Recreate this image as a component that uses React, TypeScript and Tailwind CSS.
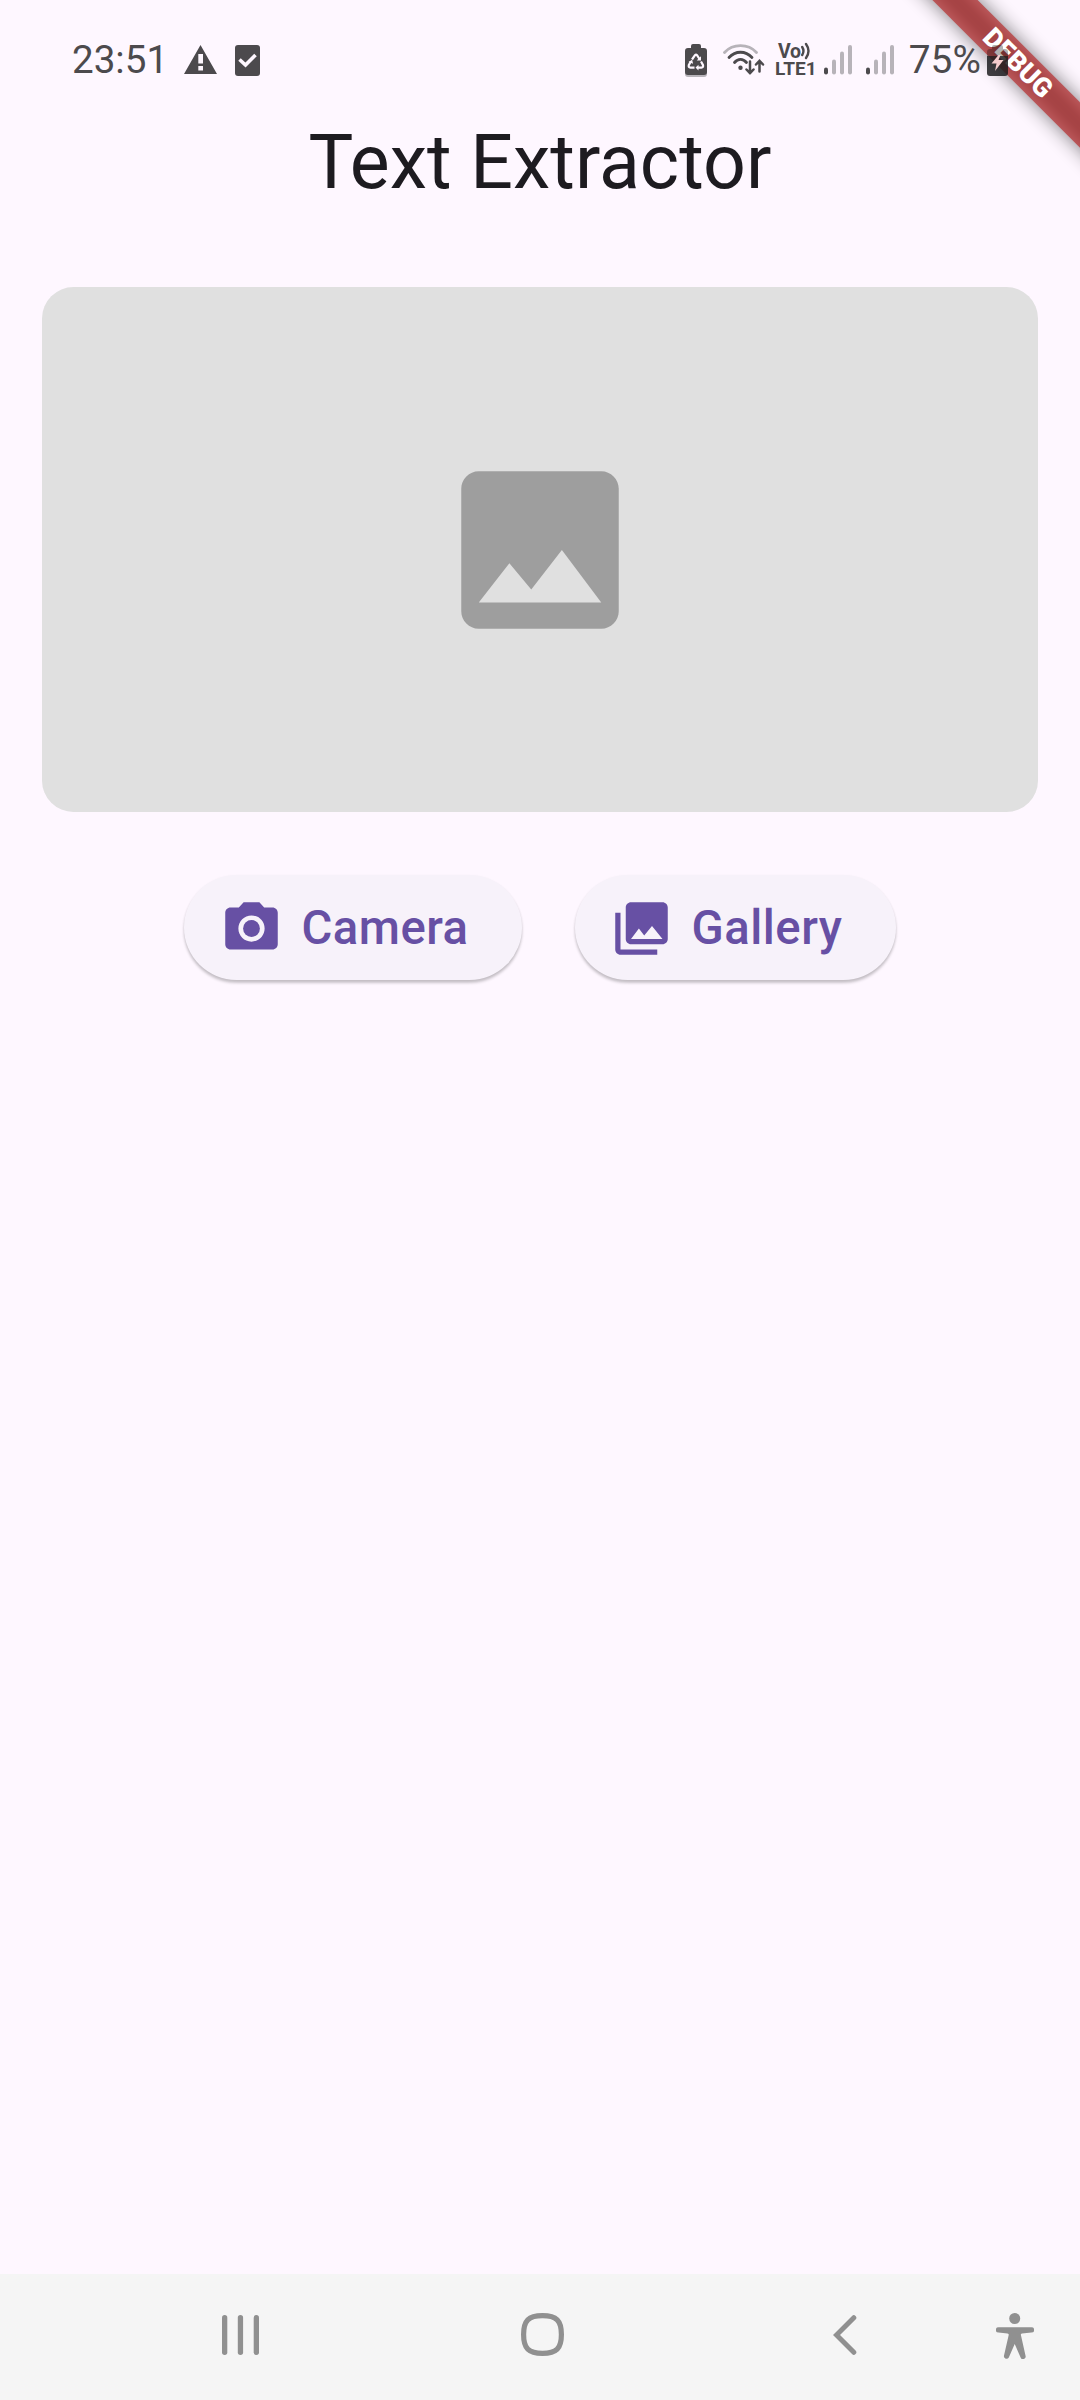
import React from 'react';

function Signal() {
  return (
    <svg width="28" height="30" viewBox="0 0 28 30" className="mt-px shrink-0">
      <rect x="0" y="22.5" width="4" height="7" rx="2" fill="#4c4a4d" />
      <rect x="8" y="14.5" width="4" height="15" rx="2" fill="#b7b3b9" />
      <rect x="16" y="6.5" width="4" height="23" rx="2" fill="#b7b3b9" />
      <rect x="24" y="0" width="4" height="29.5" rx="2" fill="#b7b3b9" />
    </svg>
  );
}

function RecycleBattery() {
  return (
    <svg width="22" height="34" viewBox="0 0 22 34" className="mt-[2px] shrink-0">
      <path d="M0 28h22v2a3 3 0 0 1-3 3H3a3 3 0 0 1-3-3z" fill="#b7b3b9" />
      <path d="M6 2a2 2 0 0 1 2-2h6a2 2 0 0 1 2 2v2h3a3 3 0 0 1 3 3v21a3 3 0 0 1-3 3H3a3 3 0 0 1-3-3V7a3 3 0 0 1 3-3h3z" fill="#4c4a4d" />
      <g fill="none" stroke="#fef7ff" strokeWidth="2.2" strokeLinejoin="round">
        <path d="M7 15.500 10 11.200q1-1.200 2 0l2.500 3.800" />
        <path d="M16 17.500l2 3.600q.6 2.400-1.600 2.500H13" />
        <path d="M5.800 17.500l-2 3.600q-.6 2.400 1.600 2.500H9.500" />
      </g>
      <path d="M16 12.200v4.300h-4.300zM13.500 20.800v5.600l-3-2.800zM3.500 18l3.600-2.200 1 4z" fill="#fef7ff" />
    </svg>
  );
}

function Wifi() {
  return (
    <svg width="42" height="34" viewBox="0 0 42 34" className="mt-[3px] shrink-0" fill="none" strokeLinecap="round">
      <path d="M1.500 8.500C10-.6 25-.6 33.500 8.500" stroke="#b7b3b9" strokeWidth="2.8" />
      <path d="M6 13.500c6.500-7 16.500-7 23 0" stroke="#4c4a4d" strokeWidth="2.8" />
      <path d="M11.500 18.500c3.500-4.300 8.500-4.300 12 0" stroke="#4c4a4d" strokeWidth="2.8" />
      <circle cx="17.500" cy="23.800" r="2.200" fill="#4c4a4d" />
      <path d="M27 17.500v11.500m-3.500-3.500 3.500 3.700 3.500-3.700M36.500 27.500V17m-3.500 3.500 3.500-3.700 3.500 3.700" stroke="#4c4a4d" strokeWidth="2.5" />
    </svg>
  );
}

function VoLte() {
  return (
    <div className="flex w-10 flex-col items-start text-[19px] leading-[17px] font-bold text-[#4c4a4d]">
      <div className="flex h-[17px] items-center pl-[3px]">
        <span className="h-[17px] text-[19.5px] leading-[18px] tracking-[-0.4px]">Vo</span>
        <svg width="10" height="18" viewBox="0 0 10 18" fill="none" stroke="#4c4a4d" strokeWidth="2.4" strokeLinecap="round">
          <path d="M1.200 5q2.500 4 0 8M5 2q5 7 0 14" />
        </svg>
      </div>
      <span>LTE1</span>
    </div>
  );
}

function ChargingBattery() {
  return (
    <svg width="21" height="32" viewBox="0 0 21 32" className="mt-[2px] shrink-0">
      <path d="M5 2a2 2 0 0 1 2-2h7a2 2 0 0 1 2 2v2h2a3 3 0 0 1 3 3v4H0V7a3 3 0 0 1 3-3h2z" fill="#000" fillOpacity="0.3" />
      <path d="M0 11h21v17a3 3 0 0 1-3 3H3a3 3 0 0 1-3-3z" fill="#1c1c1e" fillOpacity="0.84" />
      <path d="M11.500 10 4.500 18.500h5L8 26l8.500-11h-5l2-5z" fill="#f5cccd" />
    </svg>
  );
}

function StatusBar() {
  return (
    <header className="relative z-10 flex h-[120px] shrink-0 items-center pl-[72px] text-[#4c4a4d]">
      <span className="w-[111.500px] text-[38.6px] leading-none">23:51</span>
      <svg width="33" height="29" viewBox="0 0 33 29" className="-mt-px shrink-0">
        <path fillRule="evenodd" fill="#4c4a4d" d="M16.500 0 33 29H0zM14.300 9v9.500h4.700V9zM14.300 21v4.500h4.700v-4.500z" />
      </svg>
      <svg width="25" height="31" viewBox="0 0 25 31" className="mt-px ml-[18.5px] shrink-0">
        <rect width="25" height="31" rx="3" fill="#4c4a4d" />
        <path d="m4.500 14.500 6 5.500L20.500 10" fill="none" stroke="#fef7ff" strokeWidth="3.6" />
      </svg>
      <div className="ml-[425px] flex items-center">
        <RecycleBattery />
        <div className="ml-[15.5px]"><Wifi /></div>
        <div className="ml-[10.5px]"><VoLte /></div>
        <div className="ml-[9.3px]"><Signal /></div>
        <div className="ml-[14px]"><Signal /></div>
        <span className="ml-[14.5px] w-[78px] text-[38.8px] leading-none">75%</span>
        <ChargingBattery />
      </div>
    </header>
  );
}

function DebugBanner() {
  return (
    <div className="pointer-events-none absolute top-0 right-0 h-[240px] w-[240px] overflow-hidden">
      <div className="absolute top-[46.5px] left-[28px] h-[32px] w-[300px] rotate-45 bg-black/50 blur-[9.6px]" />
      <div className="absolute top-[46.5px] left-[28px] flex h-[32px] w-[300px] rotate-45 items-center justify-center bg-[#b71c1c]/63 text-[26.8px] leading-none font-black text-white">
        DEBUG
      </div>
    </div>
  );
}

type PillProps = { label: string; children: React.ReactNode; width: string };

function PillButton({ label, children, width }: PillProps) {
  return (
    <button
      className={`flex h-[105px] items-center rounded-full bg-[#f7f2fa] pt-[1.5px] pl-[35.5px] text-[47.25px] font-medium tracking-[0.5px] text-[#6750a4] shadow-[0_3px_3px_rgba(0,0,0,0.2),0_1px_3px_rgba(0,0,0,0.06)] ${width}`}
    >
      <svg viewBox="0 0 24 24" className="size-[63px] shrink-0" fill="currentColor">
        {children}
      </svg>
      <span className="ml-[18.5px]">{label}</span>
    </button>
  );
}

function NavigationBar() {
  return (
    <nav className="flex h-[126px] shrink-0 items-center bg-[#f5f5f5] pb-[5px] pl-[222px]">
      <svg width="37" height="40" viewBox="0 0 37 40" fill="#909090">
        <rect width="5.3" height="40" rx="2.65" />
        <rect x="15.8" width="5.3" height="40" rx="2.65" />
        <rect x="31.7" width="5.3" height="40" rx="2.65" />
      </svg>
      <svg width="43" height="43" viewBox="0 0 43 43" className="ml-[262px]" fill="none" stroke="#909090" strokeWidth="5.2">
        <path d="M21.500 2.600C35.500 2.600 40.400 7.500 40.400 21.500S35.500 40.400 21.500 40.400 2.600 35.500 2.600 21.500 7.500 2.600 21.500 2.600z" />
      </svg>
      <svg width="24" height="40" viewBox="0 0 24 40" className="ml-[269px]" fill="none" stroke="#909090" strokeWidth="5" strokeLinecap="round">
        <path d="M20.800 2.700 3.500 20l17.300 17.300" />
      </svg>
      <svg width="38" height="46" viewBox="0 0 38 46" className="mt-[3px] ml-[139px]" fill="#909090">
        <circle cx="18.700" cy="5.500" r="5.500" />
        <path d="M2.500 14.200h33a2.600 2.600 0 0 1 0 5.400l-9.500.8c-1 .1-1.200.8-1.100 1.600L29.600 43a2.600 2.600 0 0 1-5 1.400L18.700 31l-5.900 13.400A2.600 2.600 0 0 1 7.900 43L12.700 22c.1-.8-.2-1.500-1.200-1.600l-9-.8a2.700 2.700 0 0 1 0-5.400z" />
      </svg>
    </nav>
  );
}

export default function App() {
  return (
    <div className="relative flex h-[2400px] w-[1080px] flex-col overflow-hidden bg-[#fef7ff] font-['Roboto',sans-serif]">
      <DebugBanner />
      <StatusBar />
      <h1 className="flex h-[84px] shrink-0 items-center justify-center pt-[2px] text-[75.2px] leading-none text-[#1d1b20]">
        Text Extractor
      </h1>
      <main className="flex flex-1 flex-col items-center px-[42px] pt-[83px]">
        <section className="flex h-[525px] w-full items-center justify-center rounded-[31.5px] bg-[#e0e0e0]">
          <svg viewBox="0 0 24 24" className="size-[210px]" fill="#9e9e9e">
            <path d="M21 19V5c0-1.100-.9-2-2-2H5c-1.100 0-2 .9-2 2v14c0 1.100.9 2 2 2h14c1.100 0 2-.9 2-2zM8.500 13.500l2.500 3.010L14.500 12l4.500 6H5l3.500-4.500z" />
          </svg>
        </section>
        <div className="mt-[63px] flex gap-[52.2px]">
          <PillButton label="Camera" width="w-[338px]">
            <circle cx="12" cy="12" r="3.2" />
            <path d="M9 2L7.170 4H4c-1.100 0-2 .9-2 2v12c0 1.100.9 2 2 2h16c1.100 0 2-.9 2-2V6c0-1.100-.9-2-2-2h-3.170L15 2H9zm3 15c-2.760 0-5-2.240-5-5s2.240-5 5-5 5 2.240 5 5-2.240 5-5 5z" />
          </PillButton>
          <PillButton label="Gallery" width="w-[321px]">
            <path d="M22 16V4c0-1.100-.9-2-2-2H8c-1.100 0-2 .9-2 2v12c0 1.100.9 2 2 2h12c1.100 0 2-.9 2-2zm-11-4l2.030 2.710L16 11l4 5H8l3-4zM2 6v14c0 1.100.9 2 2 2h14v-2H4V6H2z" />
          </PillButton>
        </div>
      </main>
      <NavigationBar />
    </div>
  );
}
